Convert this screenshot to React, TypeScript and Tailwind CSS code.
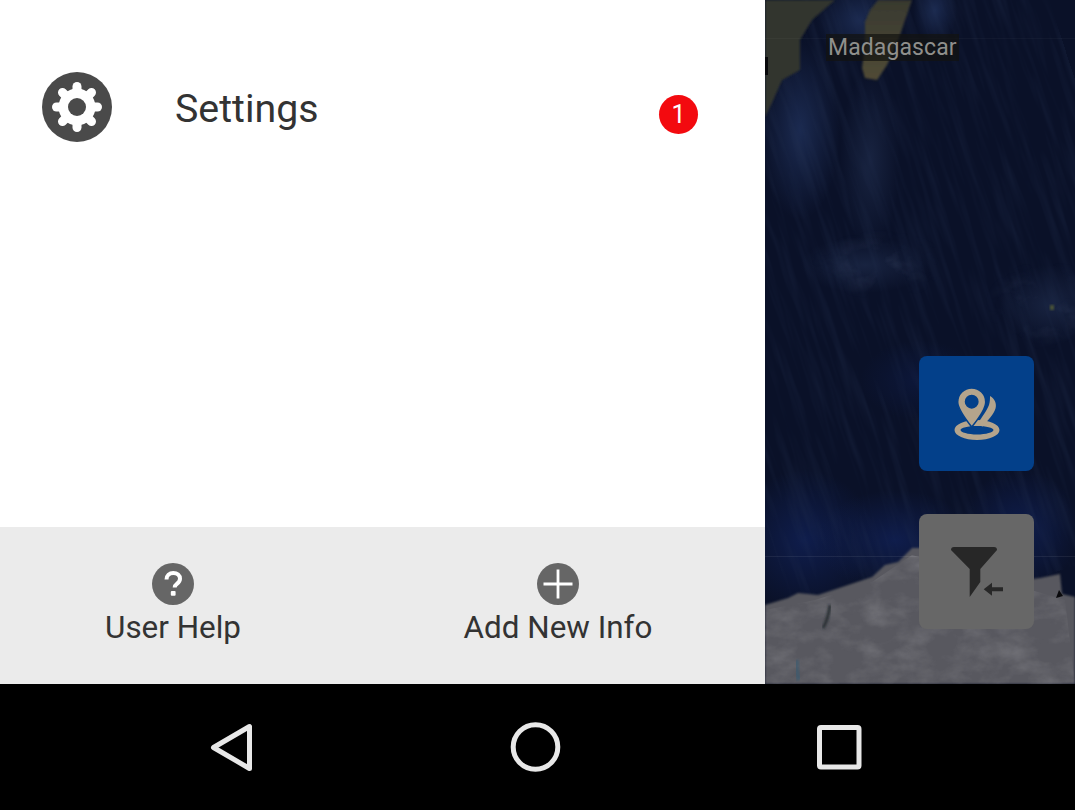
import React from "react";

function MapArt() {
  return (
    <svg className="absolute inset-0 w-full h-full" viewBox="0 0 310 684" preserveAspectRatio="none">
      <defs>
        <filter id="b1" x="-10%" y="-10%" width="120%" height="120%"><feGaussianBlur stdDeviation="1" /></filter>
        <filter id="streaks" x="0" y="0" width="100%" height="100%">
          <feTurbulence type="fractalNoise" baseFrequency="0.12 0.01" numOctaves="3" seed="7" />
          <feColorMatrix values="0 0 0 0 0.02  0 0 0 0 0.035  0 0 0 0 0.09  2 0 0 0 -0.85" />
        </filter>
        <filter id="clouds" x="0" y="0" width="100%" height="100%">
          <feTurbulence type="fractalNoise" baseFrequency="0.03 0.04" numOctaves="4" seed="12" />
          <feColorMatrix values="0 0 0 0 0.12  0 0 0 0 0.16  0 0 0 0 0.28  2.4 0 0 0 -1.2" />
        </filter>
        <filter id="ice" x="0" y="0" width="100%" height="100%">
          <feTurbulence type="fractalNoise" baseFrequency="0.03 0.05" numOctaves="4" seed="4" />
          <feColorMatrix values="0 0 0 0 0.46  0 0 0 0 0.46  0 0 0 0 0.48  2 0 0 0 -0.8" />
        </filter>
        <radialGradient id="glowA"><stop offset="0" stopColor="#1b2a50" /><stop offset="1" stopColor="#1b2a50" stopOpacity="0" /></radialGradient>
        <radialGradient id="glowB"><stop offset="0" stopColor="#0f1d4c" /><stop offset="1" stopColor="#0f1d4c" stopOpacity="0" /></radialGradient>
        <radialGradient id="glowC"><stop offset="0" stopColor="#182340" /><stop offset="1" stopColor="#182340" stopOpacity="0" /></radialGradient>
        <radialGradient id="maskFade"><stop offset="0" stopColor="#fff" /><stop offset="1" stopColor="#000" /></radialGradient>
        <linearGradient id="mad" x1="0" y1="0" x2="0" y2="1"><stop offset="0" stopColor="#38392f" /><stop offset="1" stopColor="#514b35" /></linearGradient>
        <clipPath id="iceClip"><path d="M0 684V610L50 600L107 582L147 555L300 600L310 684Z" /></clipPath>
        <mask id="cloudMask">
          <ellipse cx="115" cy="265" rx="70" ry="35" fill="url(#maskFade)" />
          <ellipse cx="280" cy="305" rx="60" ry="45" fill="url(#maskFade)" />
        </mask>
      </defs>
      <rect width="310" height="684" fill="#0a1128" />
      <ellipse cx="35" cy="130" rx="40" ry="90" fill="url(#glowA)" />
      <ellipse cx="95" cy="20" rx="45" ry="40" fill="url(#glowA)" />
      <ellipse cx="170" cy="10" rx="22" ry="35" fill="url(#glowA)" />
      <ellipse cx="105" cy="160" rx="30" ry="90" fill="url(#glowC)" />
      <ellipse cx="40" cy="540" rx="70" ry="70" fill="url(#glowB)" />
      <ellipse cx="130" cy="540" rx="80" ry="50" fill="url(#glowB)" />
      <ellipse cx="255" cy="530" rx="60" ry="60" fill="url(#glowB)" />
      <ellipse cx="100" cy="265" rx="65" ry="28" fill="url(#glowC)" />
      <ellipse cx="285" cy="305" rx="50" ry="40" fill="url(#glowC)" />
      <ellipse cx="155" cy="380" rx="60" ry="40" fill="url(#glowB)" opacity="0.5" />
      <g mask="url(#cloudMask)">
        <rect y="180" width="310" height="180" filter="url(#clouds)" opacity="0.35" />
      </g>
      <g transform="rotate(-18 155 300)">
        <rect x="-60" y="-40" width="430" height="640" filter="url(#streaks)" opacity="0.3" />
      </g>
      <path d="M0 0H70L47 20L35 40L35 70L17 80L7 103L0 117Z" fill="#33352d" filter="url(#b1)" />
      <rect x="0" y="57" width="3" height="18" fill="#07080a" />
      <path d="M113 0H147L140 20L135 35L122 65L112 80L100 78L97 68L100 45L100 22L105 10Z" fill="url(#mad)" filter="url(#b1)" />
      <path d="M0 684V605L23 598L33 593L53 595L83 585L107 577L120 565L133 562L147 548L160 548L200 560L260 580L275 578L295 574L297 594L310 597V684Z" fill="#58595e" filter="url(#b1)" />
      <rect y="540" width="310" height="144" filter="url(#ice)" opacity="0.25" clipPath="url(#iceClip)" />
      <path d="M65 605Q63 620 58 628" stroke="#2b3036" strokeWidth="3" fill="none" filter="url(#b1)" />
      <path d="M32 660q-2 10 2 20" stroke="#3a5a70" strokeWidth="5" fill="none" filter="url(#b1)" opacity="0.7" />
      <path d="M294 590l4 6-7 2Z" fill="#0a0a0d" />
      <rect x="0" y="556" width="310" height="1" fill="#ffffff" opacity="0.07" />
      <rect x="0" y="38" width="310" height="1" fill="#ffffff" opacity="0.03" />
      <rect x="285" y="305" width="4" height="5" fill="#4a5238" filter="url(#b1)" />
    </svg>
  );
}

export default function App() {
  return (
    <div className="w-[1075px] h-[810px] flex flex-col overflow-hidden bg-black font-['Roboto',sans-serif]">
      <div className="h-[684px] flex">
        <aside className="w-[765px] bg-white flex flex-col">
          <div className="flex-1 pt-[72px] pl-[42px] pr-[67px]">
            <div className="flex items-start">
              <div className="w-[70px] h-[70px]">
                <svg viewBox="0 0 70 70" className="w-full h-full">
                  <circle cx="35" cy="35" r="35" fill="#4a4a4a" />
                  <circle cx="35" cy="35" r="18.500" fill="#fff" />
                  <g stroke="#fff" strokeWidth="9" strokeLinecap="round">
                    <path d="M35 14.500V55.500" />
                    <path d="M14.500 35H55.500" />
                    <path d="M20.500 20.500L49.500 49.500" />
                    <path d="M49.500 20.500L20.500 49.500" />
                  </g>
                  <circle cx="35" cy="35" r="9" fill="#4a4a4a" />
                </svg>
              </div>
              <span className="ml-[63px] mt-[14px] text-[39.300px] leading-[46px] text-[#333333]">Settings</span>
              <span className="ml-auto mt-[23px] w-[39px] h-[39px] rounded-full bg-[#f30a0f] text-white text-[25px] leading-[39px] text-center">1</span>
            </div>
          </div>
          <div className="h-[157px] bg-[#ebebeb] grid grid-cols-[346px_1fr] pt-[36px]">
            <div className="flex flex-col items-center">
              <svg viewBox="0 0 42 42" className="w-[42px] h-[42px]">
                <circle cx="21" cy="21" r="21" fill="#666666" />
                <path d="M14.500 16.500c0-4 3-6.500 6.800-6.500 3.900 0 6.700 2.400 6.700 5.800 0 2.600-1.500 3.900-3.100 5.100-1.500 1.100-2.200 1.800-2.200 3.600" fill="none" stroke="#fff" strokeWidth="4" />
                <rect x="18.800" y="28" width="4.800" height="4.800" rx="1" fill="#fff" />
              </svg>
              <span className="text-[31.400px] leading-[38px] text-[#333333] mt-[4px]">User Help</span>
            </div>
            <div className="flex flex-col items-center pl-[5px]">
              <svg viewBox="0 0 42 42" className="w-[42px] h-[42px]">
                <circle cx="21" cy="21" r="21" fill="#666666" />
                <path d="M21 6.500v29M6.500 21h29" stroke="#fff" strokeWidth="2.800" />
              </svg>
              <span className="text-[31.400px] leading-[38px] text-[#333333] mt-[4px]">Add New Info</span>
            </div>
          </div>
        </aside>
        <main className="relative flex-1 overflow-hidden">
          <MapArt />
          <span className="absolute left-[61px] top-[34px] px-[2px] bg-[#12130f]/70 text-[23px] leading-[27px] text-[#8f8f8c] tracking-[0.1px]">Madagascar</span>
          <div className="absolute left-[154px] top-[356px] flex flex-col gap-[43px]">
            <button className="w-[115px] h-[115px] rounded-[8px] bg-[#03408a] flex items-center justify-center">
              <svg viewBox="0 0 46 52" className="w-[46px] h-[52px]">
                <path fillRule="evenodd" d="M23 32C10.500 32 .5 36.500.5 42S10.500 52 23 52s22.500-4.500 22.500-10S35.500 32 23 32Zm0 6c9 0 16.500 1.800 16.500 4s-7.500 4.500-16.500 4.500S6.500 44.200 6.500 42 14 38 23 38Z" fill="#b4a48c" />
                <path d="M36 8c4.500 2.500 7 7.500 5.500 12.500C40 26 34 32 28.500 38.500c-2-.8-3.500-2-4.500-3.500C28 29 33 22.500 35 17c1-3.500 1-6.500 1-9Z" fill="#b4a48c" />
                <path fillRule="evenodd" d="M17.700 0C25.500 0 31.700 6.200 31.700 14c0 7-7 16.500-14 25C11 30.500 3.700 21 3.700 14 3.700 6.200 10 0 17.700 0Zm0 7.500a6.200 6.200 0 1 0 0 12.400 6.200 6.200 0 0 0 0-12.400Z" fill="#b4a48c" stroke="#03408a" strokeWidth="1.500" />
              </svg>
            </button>
            <button className="w-[115px] h-[115px] rounded-[8px] bg-[#676767] flex items-center justify-center">
              <svg viewBox="0 0 52 51" className="w-[52px] h-[51px] ml-[1px] mt-[1px]">
                <path d="M0 3Q0 0 3 0H43Q46 0 46 3L29.300 22V35L18.700 50V22Z" fill="#272727" />
                <path d="M32.700 42.300L41 35.800V40.300H52V44.300H41V48.800Z" fill="#272727" />
              </svg>
            </button>
          </div>
        </main>
      </div>
      <nav className="h-[126px] bg-black relative">
        <svg viewBox="0 0 1075 126" className="w-full h-full">
          <path d="M249.500 42.500v42L213.500 63.500Z" fill="none" stroke="#e8e8e8" strokeWidth="5" strokeLinejoin="round" />
          <circle cx="535.500" cy="63" r="22.300" fill="none" stroke="#e8e8e8" strokeWidth="5" />
          <rect x="819.500" y="43.500" width="39.500" height="39.500" rx="1.500" fill="none" stroke="#e8e8e8" strokeWidth="5" />
        </svg>
      </nav>
    </div>
  );
}
